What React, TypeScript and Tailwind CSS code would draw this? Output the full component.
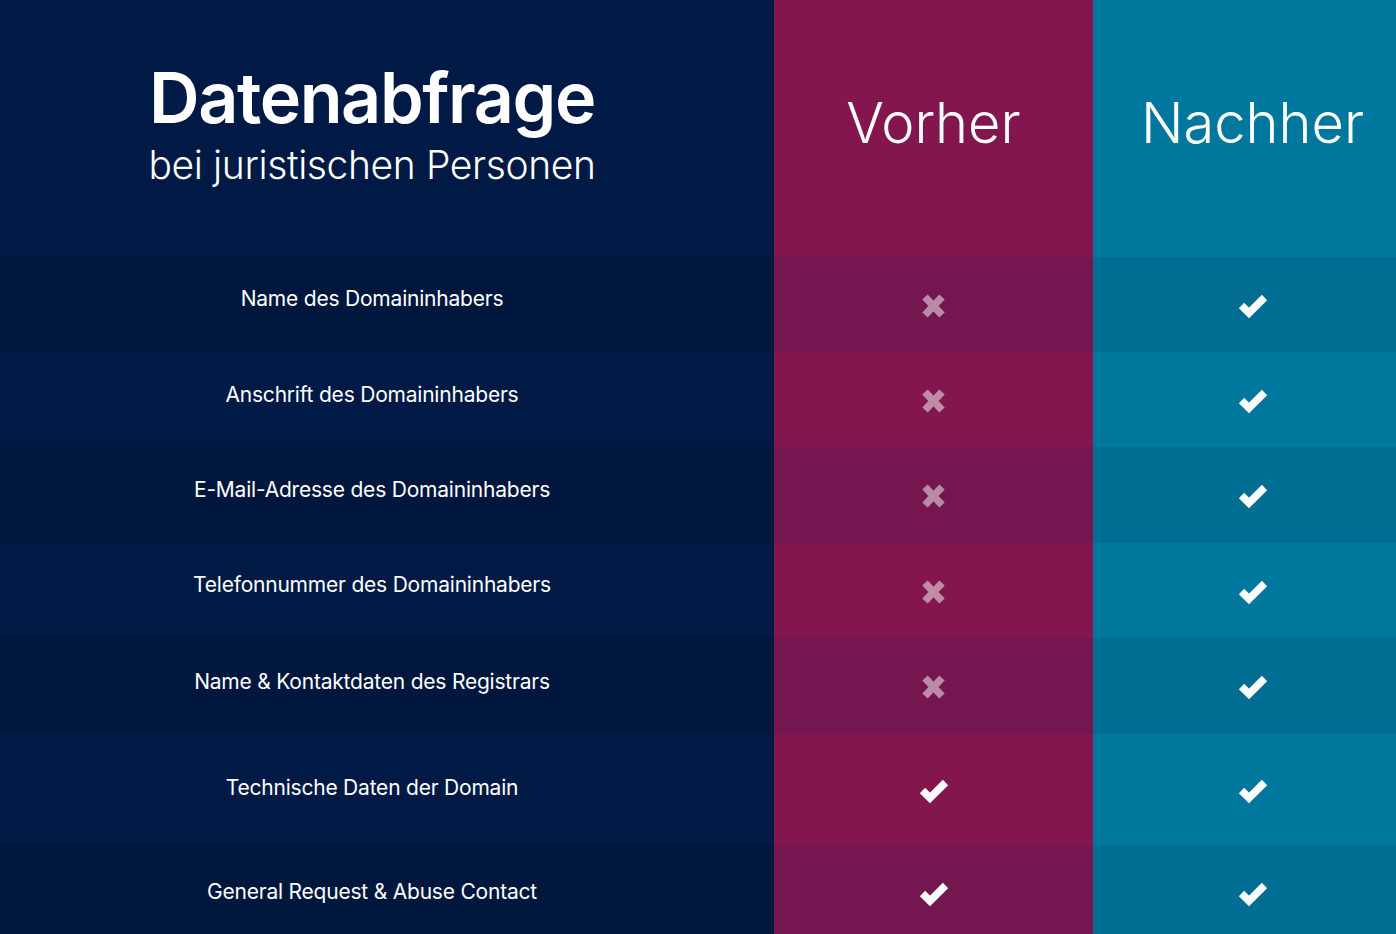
import React from "react";

type Row = { label: string; before: boolean; h: string; shift: string };

const rows: Row[] = [
  { label: "Name des Domaininhabers", before: false, h: "h-[95px]", shift: "-translate-y-[6px]" },
  { label: "Anschrift des Domaininhabers", before: false, h: "h-[95px]", shift: "-translate-y-[5px]" },
  { label: "E-Mail-Adresse des Domaininhabers", before: false, h: "h-[96px]", shift: "-translate-y-[5px]" },
  { label: "Telefonnummer des Domaininhabers", before: false, h: "h-[95px]", shift: "-translate-y-[6px]" },
  { label: "Name & Kontaktdaten des Registrars", before: false, h: "h-[96px]", shift: "-translate-y-[4px]" },
  { label: "Technische Daten der Domain", before: true, h: "h-[111px]", shift: "-translate-y-[2px]" },
  { label: "General Request & Abuse Contact", before: true, h: "h-[95px]", shift: "-translate-y-[1px]" },
];

function Check() {
  return (
    <svg width="30" height="26" viewBox="0 0 30 26" className="translate-y-[1px]">
      <polyline
        points="3.5,12.5 11,20 26.5,4.5"
        fill="none"
        stroke="#ffffff"
        strokeWidth="7.5"
        strokeLinejoin="miter"
        strokeLinecap="butt"
      />
    </svg>
  );
}

function Cross() {
  return (
    <svg width="25" height="26" viewBox="0 0 25 26" className="translate-y-[1px] opacity-50">
      <g stroke="#ffffff" strokeWidth="7.5" strokeLinecap="butt">
        <line x1="4" y1="4" x2="21" y2="22" />
        <line x1="21" y1="4" x2="4" y2="22" />
      </g>
    </svg>
  );
}

export default function App() {
  return (
    <div
      className="w-[1396px] h-[934px] overflow-hidden bg-[#001a45] text-white"
      style={{ fontFamily: "Inter, 'Noto Sans', sans-serif" }}
    >
      <div className="w-[1412px]">
        {/* header */}
        <div className="flex h-[257px]">
          <div className="w-[774px] bg-[#001a45] flex flex-col items-center pr-[30px] pt-[58px]">
            <h1 className="text-[70px] font-semibold tracking-[-0.02em] leading-[80px]">
              Datenabfrage
            </h1>
            <p className="text-[39px] font-light tracking-[-0.01em] leading-[46px] mt-[4px]">
              bei juristischen Personen
            </p>
          </div>
          <div className="w-[319px] bg-[#83164f] flex justify-center pt-[88px]">
            <span className="text-[56px] font-light leading-[70px]">Vorher</span>
          </div>
          <div className="w-[319px] bg-[#00789d] flex justify-center pt-[88px]">
            <span className="text-[56px] font-light leading-[70px]">Nachher</span>
          </div>
        </div>

        {/* rows */}
        {rows.map((r, i) => {
          const dark = i % 2 === 0;
          return (
            <div key={r.label} className={`flex ${r.h}`}>
              <div
                className={`w-[774px] flex items-center justify-center pr-[30px] ${
                  dark ? "bg-[#00173d]" : "bg-[#001a45]"
                }`}
              >
                <span className={`text-[21px] tracking-[-0.01em] ${r.shift}`}>{r.label}</span>
              </div>
              <div
                className={`w-[319px] flex items-center justify-center ${
                  dark ? "bg-[#741650]" : "bg-[#83164f]"
                }`}
              >
                {r.before ? <Check /> : <Cross />}
              </div>
              <div
                className={`w-[319px] flex items-center justify-center ${
                  dark ? "bg-[#006d93]" : "bg-[#00789d]"
                }`}
              >
                <Check />
              </div>
            </div>
          );
        })}
      </div>
    </div>
  );
}
